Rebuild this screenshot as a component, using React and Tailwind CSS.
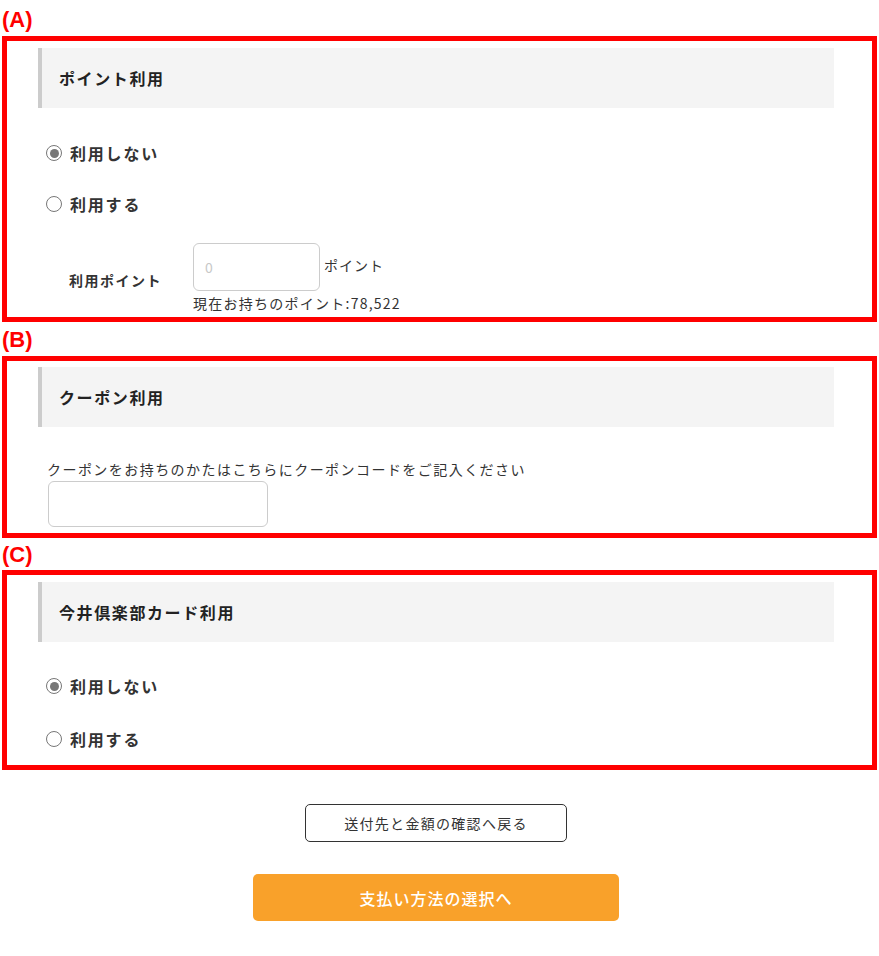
import { useState } from 'react';

const FONT = { fontFamily: '"Noto Sans CJK JP", "Noto Sans", sans-serif' };

const SectionLabel = ({ children, className = '' }) => (
  <div
    className={`h-[24px] leading-[24px] text-[22px] font-bold text-[#ff0000] ${className}`}
    style={{ fontFamily: '"Liberation Sans", Arial, sans-serif' }}
  >
    {children}
  </div>
);

const Heading = ({ children }) => (
  <div className="h-[60px] bg-[#f4f4f4] border-l-4 border-[#cccccc] pl-[17px] flex items-center">
    <h2 className="text-[16px] font-bold tracking-[1.6px] text-[#222]">{children}</h2>
  </div>
);

const Radio = ({ checked, label, onClick, className = '' }) => (
  <label onClick={onClick} className={`h-[24px] ml-[8px] flex items-center gap-[8px] cursor-pointer ${className}`}>
    <span className="w-[16px] h-[16px] rounded-full border-[1.5px] border-[#777] bg-white flex items-center justify-center">
      {checked && <span className="w-[9px] h-[9px] rounded-full bg-[#777]"></span>}
    </span>
    <span className="text-[16px] font-bold tracking-[1.8px] text-[#333]">{label}</span>
  </label>
);

export default function App() {
  const [usePoint, setUsePoint] = useState(false);
  const [useCard, setUseCard] = useState(false);
  const [points, setPoints] = useState('');
  const [coupon, setCoupon] = useState('');

  return (
    <div className="w-[879px] min-h-[956px] bg-white px-[2px] text-[#333]" style={FONT}>

      {/* (A) ポイント */}
      <SectionLabel className="mt-[8px] mb-[4px]">(A)</SectionLabel>
      <div className="border-[5px] border-[#ff0000] pt-[7px] pl-[31px] pr-[38px] pb-[4px]">
        <Heading>ポイント利用</Heading>
        <Radio className="mt-[33px]" checked={!usePoint} label="利用しない" onClick={() => setUsePoint(false)} />
        <Radio className="mt-[27px]" checked={usePoint} label="利用する" onClick={() => setUsePoint(true)} />

        <div className="mt-[27px] flex">
          <div className="w-[155px] pl-[31px] pt-[27px] text-[14px] leading-[20px] font-bold tracking-[1.5px]">利用ポイント</div>
          <div className="flex flex-col">
            <div className="flex items-start">
              <input
                type="text"
                value={points}
                onChange={(e) => setPoints(e.target.value)}
                placeholder="0"
                className="w-[127px] h-[48px] border border-[#cccccc] rounded-[6px] pl-[11px] text-[14px] outline-none placeholder-[#c8c8c8]"
              />
              <span className="ml-[4px] mt-[12px] text-[14px] leading-[20px] tracking-[1px]">ポイント</span>
            </div>
            <p className="mt-[2px] text-[14px] leading-[20px] tracking-[1.25px]">現在お持ちのポイント:78,522</p>
          </div>
        </div>
      </div>

      {/* (B) クーポン */}
      <SectionLabel className="mt-[6px] mb-[4px]">(B)</SectionLabel>
      <div className="border-[5px] border-[#ff0000] pt-[6px] pl-[31px] pr-[38px] pb-[6px]">
        <Heading>クーポン利用</Heading>
        <p className="mt-[32px] ml-[9px] text-[14px] leading-[20px] tracking-[1.45px]">
          クーポンをお持ちのかたはこちらにクーポンコードをご記入ください
        </p>
        <input
          type="text"
          value={coupon}
          onChange={(e) => setCoupon(e.target.value)}
          className="block mt-[2px] ml-[10px] w-[220px] h-[46px] border border-[#cccccc] rounded-[6px] px-[10px] text-[14px] outline-none"
        />
      </div>

      {/* (C) 今井倶楽部カード */}
      <SectionLabel className="mt-[5px] mb-[3px]">(C)</SectionLabel>
      <div className="border-[5px] border-[#ff0000] pt-[7px] pl-[31px] pr-[38px] pb-[14px]">
        <Heading>今井倶楽部カード利用</Heading>
        <Radio className="mt-[32px]" checked={!useCard} label="利用しない" onClick={() => setUseCard(false)} />
        <Radio className="mt-[29px]" checked={useCard} label="利用する" onClick={() => setUseCard(true)} />
      </div>

      {/* ボタン */}
      <div className="flex flex-col items-center pr-[7px] pb-[35px]">
        <button className="mt-[34px] w-[262px] h-[38px] border border-[#333] rounded-[5px] bg-white text-[14px] tracking-[1.3px] text-[#333]">
          送付先と金額の確認へ戻る
        </button>
        <button className="mt-[32px] w-[366px] h-[47px] rounded-[5px] bg-[#f9a12a] text-white text-[16px] font-medium tracking-[1px]">
          支払い方法の選択へ
        </button>
      </div>
    </div>
  );
}
